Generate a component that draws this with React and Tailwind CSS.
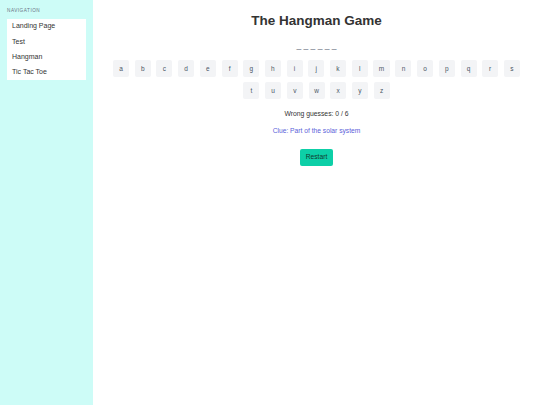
import React, { useState } from "react";

const LETTERS = "abcdefghijklmnopqrstuvwxyz".split("");
const WORD = "planet";
const MAX_WRONG = 6;

const navLinks = ["Landing Page", "Test", "Hangman", "Tic Tac Toe"];

// Sidebar
const Sidebar = () => (
  <aside className="w-[93px] shrink-0 bg-[#cdfcf7] px-[7px] pt-[8px]">
    <p className="text-[4.7px] leading-[5px] tracking-[0.5px] text-gray-500 uppercase">
      Navigation
    </p>
    <ul className="mt-[6px] bg-white">
      {navLinks.map((label) => (
        <li
          key={label}
          className="h-[15.2px] pl-[5px] flex items-center text-[7px] text-[#333]"
        >
          {label}
        </li>
      ))}
    </ul>
  </aside>
);

export default function App() {
  const [guessed, setGuessed] = useState([]);
  const wrong = guessed.filter((l) => !WORD.includes(l)).length;

  const masked = WORD.split("")
    .map((c) => (guessed.includes(c) ? c : "_"))
    .join(" ");

  return (
    <div
      className="flex min-h-[405px] w-full bg-white"
      style={{ fontFamily: '"Liberation Sans", Arial, sans-serif' }}
    >
      <Sidebar />

      {/* Main content */}
      <main className="flex-1 flex flex-col items-center pt-[13px]">
        <h1 className="text-[13.5px] leading-[16px] font-bold text-[#333]">
          The Hangman Game
        </h1>

        <p className="mt-[11px] text-[8.5px] leading-[10px] text-gray-500">{masked}</p>

        <div className="mt-[10px] max-w-[420px] flex flex-wrap justify-center gap-x-[5.7px] gap-y-[5px]">
          {LETTERS.map((l) => (
            <button
              key={l}
              onClick={() => setGuessed((g) => (g.includes(l) ? g : [...g, l]))}
              className="h-[17px] min-w-[16px] px-[5.5px] rounded-[2px] bg-gray-100 text-[6.5px] leading-[7px] text-gray-600"
            >
              {l}
            </button>
          ))}
        </div>

        <p className="mt-[9.5px] text-[6.8px] leading-[9px] text-[#333]">
          Wrong guesses: {wrong} / {MAX_WRONG}
        </p>

        <p className="mt-[8px] text-[6.7px] leading-[9px] text-[#5b61d9]">
          Clue: Part of the solar system
        </p>

        <button
          onClick={() => setGuessed([])}
          className="mt-[14px] h-[17px] px-[6px] rounded-[2px] bg-[#0dcfa7] text-[6.7px] text-[#123a30]"
        >
          Restart
        </button>
      </main>
    </div>
  );
}
